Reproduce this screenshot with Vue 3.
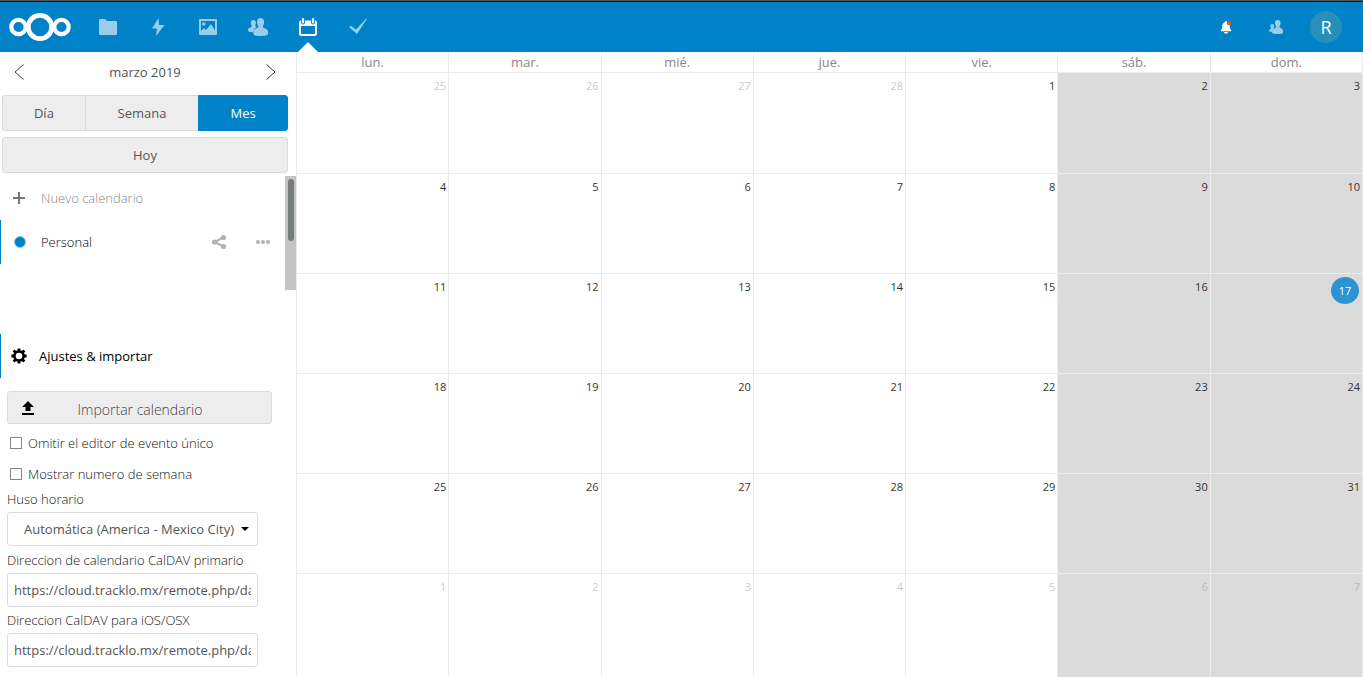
<script setup>
import { ref } from 'vue'

const weekdays = ['lun.', 'mar.', 'mié.', 'jue.', 'vie.', 'sáb.', 'dom.']
const start = new Date(2019, 1, 25)
const weeks = Array.from({ length: 6 }, (_, w) =>
  Array.from({ length: 7 }, (_, d) => {
    const date = new Date(start.getFullYear(), start.getMonth(), start.getDate() + w * 7 + d)
    const inMonth = date.getMonth() === 2
    return {
      day: date.getDate(),
      other: !inMonth,
      weekend: d > 4,
      today: inMonth && date.getDate() === 17
    }
  })
)

const views = [
  { id: 'day', label: 'Día' },
  { id: 'week', label: 'Semana' },
  { id: 'month', label: 'Mes' }
]
const view = ref('month')
const skipEditor = ref(false)
const weekNumbers = ref(false)
const primaryUrl = ref('https://cloud.tracklo.mx/remote.php/dav/')
const iosUrl = ref('https://cloud.tracklo.mx/remote.php/dav/principals/')
</script>

<template>
  <div class="page">
    <header class="topbar">
      <a class="logo" href="#" aria-label="Nextcloud">
        <svg width="64" height="32" viewBox="0 0 64 32" fill="none" stroke="#fff">
          <circle cx="10.5" cy="16" r="7.2" stroke-width="4.2" />
          <circle cx="32" cy="16" r="11.7" stroke-width="4.8" />
          <circle cx="53.5" cy="16" r="7.2" stroke-width="4.2" />
        </svg>
      </a>
      <nav class="apps">
        <a href="#" aria-label="Archivos">
          <svg width="20" height="20" viewBox="0 0 20 20"><path d="M1.500 2H7l2 2h9.500l.5.5v13l-.5.5h-17l-.5-.5v-15z" /></svg>
        </a>
        <a href="#" aria-label="Actividad">
          <svg width="20" height="20" viewBox="0 0 20 20"><path d="M10.500 1L4 11.500h5L8 19l8.500-11H11z" /></svg>
        </a>
        <a href="#" aria-label="Galería">
          <svg width="20" height="20" viewBox="0 0 20 20">
            <path fill-rule="evenodd" d="M1.500 2h17l.5.5v15l-.5.5h-17l-.5-.5v-15zM3 4v10l3-3 2 2 5-6 4 6.500V4z" />
            <circle cx="5.800" cy="7" r="1.800" />
          </svg>
        </a>
        <a href="#" aria-label="Contactos">
          <svg width="20" height="20" viewBox="0 0 20 20">
            <path d="M12.500 1C10.300 1 9 2.700 9 4.700c0 1.500.5 3 1.200 4V10.500C8 11.500 5.500 12 5.500 14.500v2.500c0 1.500 3 2 7.200 2s7.300-.7 7.300-2v-2.500c0-2.500-3-3-5-4V8.700c.7-1 1.100-2.500 1.100-4C16.100 2.700 14.700 1 12.500 1z" />
            <path d="M5.200 3C3.700 3 2.700 4.200 2.700 5.700c0 1 .4 2 .9 2.700v1.500C2 10.700 0 11 0 12.700v1c0 .7 1.500 1.200 5.500 1.800 0-3 1-4.500 3.500-5.700-.9-.4-1.900-.8-1.900-1.400.5-.7.8-1.700.8-2.700C7.900 4.200 6.800 3 5.200 3z" />
          </svg>
        </a>
        <a href="#" class="active" aria-label="Calendario">
          <svg width="20" height="20" viewBox="0 0 20 20">
            <path fill-rule="evenodd" d="M3 3.500h14c1.200 0 2 .8 2 2V17c0 1.200-.8 2-2 2H3c-1.200 0-2-.8-2-2V5.500c0-1.200.8-2 2-2zM3 9v7.500l.5.5h13l.5-.5V9z" />
            <path d="M5 2.200v3.300M15 2.200v3.300" stroke="#0082c9" stroke-width="4" stroke-linecap="round" />
            <path d="M5 2v3.500M15 2v3.500" stroke="#fff" stroke-width="2.200" stroke-linecap="round" />
          </svg>
        </a>
        <a href="#" aria-label="Tareas">
          <svg width="20" height="20" viewBox="0 0 20 20"><path d="M1 10l1.800-1.200L8 12.500 18.500 1.200l.5.500L9 17z" /></svg>
        </a>
      </nav>
      <div class="tools">
        <button type="button" aria-label="Notificaciones">
          <svg width="16" height="16" viewBox="0 0 16 16">
            <path fill="#fff" d="M8 2C7.400 2 7.200 2.400 7.200 3 5.300 3.500 4.500 5 4.300 7l-.3 2.500L2.800 11v1.200h10.400V11L12 9.500 11.700 7C11.500 5 10.700 3.500 8.800 3 8.800 2.400 8.600 2 8 2zM6 13h4c0 1-.9 1.700-2 1.700S6 14 6 13z" />
            <circle cx="11" cy="4" r="2.200" fill="#e9521c" />
          </svg>
        </button>
        <button type="button" aria-label="Contactos">
          <svg width="16" height="16" viewBox="0 0 16 16" fill="#99cde9">
            <path d="M9.800 1C8 1 6.900 2.200 6.900 3.800c0 1.300.4 2.300 1.100 3.200v1.600c-1.800.9-4 1.400-4 3.200v1.900c0 .8 2.700 1.300 5.800 1.300s5.200-.5 5.200-1.300v-1.900c0-1.900-2-2.400-3.400-3.200V7c.6-.9 1-1.900 1-3.200C12.600 2.200 11.600 1 9.800 1z" />
            <path d="M4.200 5C3 5 2.300 5.800 2.300 6.900c0 .8.300 1.500.7 2v.9C2 10.300 1 10.500 1 11.500v.7c.6.500 1.600.6 2.700.7 0-2 1.200-3 2.500-3.700L5.700 9c.3-.5.5-1.300.5-2.100C6.200 5.800 5.300 5 4.200 5z" />
          </svg>
        </button>
        <button type="button" aria-label="Cuenta"><span class="avatar">R</span></button>
      </div>
    </header>

    <div class="body">
      <aside class="sidebar">
        <div class="month-nav">
          <button type="button" aria-label="Mes anterior">
            <svg width="10" height="16" viewBox="0 0 10 16"><path d="M9.500 .5L1 8l8.500 7.500" /></svg>
          </button>
          <h1>marzo 2019</h1>
          <button type="button" aria-label="Mes siguiente">
            <svg width="10" height="16" viewBox="0 0 10 16"><path d="M.5 .5L9 8l-8.500 7.500" /></svg>
          </button>
        </div>
        <div class="views">
          <button
            v-for="v in views"
            :key="v.id"
            type="button"
            :class="[v.id, { selected: view === v.id }]"
            @click="view = v.id"
          >{{ v.label }}</button>
        </div>
        <button type="button" class="today-button">Hoy</button>

        <div class="calendars">
          <ul>
            <li>
              <button type="button" class="new-calendar">
                <svg width="12" height="12" viewBox="0 0 12 12"><path d="M6 0v12M0 6h12" stroke="#777" stroke-width="2" /></svg>
                <span>Nuevo calendario</span>
              </button>
            </li>
            <li class="calendar">
              <span class="dot"></span>
              <a href="#">Personal</a>
              <button type="button" aria-label="Compartir">
                <svg width="16" height="16" viewBox="0 0 16 16" fill="#b2b2b2">
                  <path d="M12.500 3.500L3.500 8l9 4.500" fill="none" stroke="#b2b2b2" stroke-width="2" />
                  <circle cx="12.500" cy="3.500" r="2.600" /><circle cx="3.500" cy="8" r="2.600" /><circle cx="12.500" cy="12.500" r="2.600" />
                </svg>
              </button>
              <button type="button" aria-label="Más">
                <svg width="16" height="16" viewBox="0 0 16 16" fill="#b2b2b2">
                  <circle cx="3" cy="8" r="2" /><circle cx="8" cy="8" r="2" /><circle cx="13" cy="8" r="2" />
                </svg>
              </button>
            </li>
          </ul>
          <div class="track"><div class="thumb"></div></div>
        </div>

        <section class="settings">
          <button type="button" class="settings-toggle">
            <svg width="16" height="16" viewBox="0 0 16 16">
              <circle cx="8" cy="8" r="4.600" fill="none" stroke="#000" stroke-width="2.600" />
              <path d="M8 .4v3M8 12.600v3M.4 8h3M12.600 8h3M2.600 2.600l2 2M11.400 11.400l2 2M2.600 13.400l2-2M11.400 4.600l2-2" stroke="#000" stroke-width="2.800" />
            </svg>
            <span>Ajustes &amp; importar</span>
          </button>
          <div class="settings-body">
            <button type="button" class="import">
              <svg width="14" height="16" viewBox="0 0 14 16"><path d="M7 1l6 6H9.500v4h-5V7H1zM1 13h12v2H1z" /></svg>
              <span>Importar calendario</span>
            </button>
            <label class="check"><input v-model="skipEditor" type="checkbox" />Omitir el editor de evento único</label>
            <label class="check"><input v-model="weekNumbers" type="checkbox" />Mostrar numero de semana</label>
            <label class="caption first" for="timezone">Huso horario</label>
            <div class="select">
              <select id="timezone">
                <option>Automática (America - Mexico City)</option>
              </select>
              <svg width="8" height="4" viewBox="0 0 8 4"><path d="M0 0h8L4 4z" /></svg>
            </div>
            <label class="caption" for="primary">Direccion de calendario CalDAV primario</label>
            <input id="primary" v-model="primaryUrl" class="url" type="text" readonly />
            <label class="caption" for="ios">Direccion CalDAV para iOS/OSX</label>
            <input id="ios" v-model="iosUrl" class="url" type="text" readonly />
          </div>
        </section>
      </aside>

      <main class="month">
        <table>
          <thead>
            <tr><th v-for="d in weekdays" :key="d" scope="col">{{ d }}</th></tr>
          </thead>
          <tbody>
            <tr v-for="(week, i) in weeks" :key="i">
              <td v-for="(c, j) in week" :key="j" :class="{ other: c.other, weekend: c.weekend, today: c.today }">
                <span>{{ c.day }}</span>
              </td>
            </tr>
          </tbody>
        </table>
      </main>
    </div>
  </div>
</template>

<style>
body {
  background: #fff;
}
</style>

<style scoped>
.page {
  display: flex;
  flex-direction: column;
  height: 100vh;
  overflow: hidden;
  font: 300 13px/18px "Open Sans", "Noto Sans", sans-serif;
  color: #111;
}
.page *,
.page *::before,
.page *::after {
  box-sizing: border-box;
}
button,
input,
select {
  font: inherit;
  color: inherit;
  margin: 0;
  padding: 0;
  border: 0;
  background: none;
}
a {
  color: inherit;
  text-decoration: none;
}
svg {
  display: block;
  flex: none;
}

.topbar {
  display: flex;
  align-items: center;
  flex: none;
  height: 52px;
  padding: 1px 12px 0 8px;
  background: #0082c9;
  border-top: 1px solid #555;
  box-shadow: inset 0 1px #0c1a22;
}
.logo {
  width: 75px;
}
.apps,
.tools {
  display: flex;
  height: 100%;
}
.tools {
  margin-left: auto;
}
.apps a,
.tools button {
  position: relative;
  display: flex;
  align-items: center;
  justify-content: center;
  width: 50px;
  height: 100%;
}
.apps a {
  fill: #99cde9;
}
.apps .active {
  fill: #fff;
}
.apps .active::after {
  content: "";
  position: absolute;
  bottom: 0;
  left: 15px;
  border: 10px solid transparent;
  border-top: 0;
  border-bottom-color: #fff;
}
.avatar {
  width: 32px;
  height: 32px;
  border-radius: 50%;
  background: #2890b8;
  color: #fff;
  font-size: 18px;
  font-weight: 500;
  line-height: 32px;
}

.body {
  display: flex;
  flex: 1;
  min-height: 0;
}
.sidebar {
  display: flex;
  flex-direction: column;
  flex: none;
  width: 296px;
}
.month-nav {
  display: flex;
  align-items: center;
  justify-content: space-between;
  height: 43px;
  padding: 0 20px 3px 14px;
}
.month-nav svg {
  fill: none;
  stroke: #333;
}
.month-nav h1 {
  margin: 0;
  font-size: 13px;
  font-weight: 400;
  color: #555;
}
.views {
  display: flex;
  height: 36px;
  margin: 0 8px 6px 2px;
}
.views button,
.today-button {
  border: 1px solid #dbdbdb;
  background: #ededed;
  color: #555;
  font-weight: 400;
}
.views .day {
  flex: 83;
  border-right: 0;
  border-radius: 3px 0 0 3px;
}
.views .week {
  flex: 114;
  border-right: 0;
}
.views .month {
  flex: 89;
  border-radius: 0 3px 3px 0;
}
.views .selected {
  background: #0082c9;
  border-color: #0082c9;
  color: #fff;
}
.today-button {
  height: 36px;
  margin: 0 8px 3px 2px;
  border-radius: 3px;
}

.calendars {
  display: flex;
  height: 114px;
}
.calendars ul {
  flex: 1;
  margin: 0;
  padding: 0;
  list-style: none;
}
.calendars li {
  display: flex;
  align-items: center;
  height: 44px;
}
.new-calendar {
  display: flex;
  align-items: center;
  gap: 16px;
  padding-left: 13px;
  color: #888;
}
.calendar {
  border-left: 1px solid #0082c9;
}
.calendar .dot {
  width: 12px;
  height: 12px;
  margin: 0 15px 0 13px;
  border: 1px solid #8fc4e2;
  border-radius: 50%;
  background: #0082c9;
}
.calendar a {
  flex: 1;
  color: #000;
}
.calendar button {
  display: flex;
  align-items: center;
  justify-content: center;
  width: 44px;
  height: 44px;
}
.track {
  width: 11px;
  padding: 3px 2px 0 3px;
  background: #c3c5c4;
}
.thumb {
  height: 62px;
  border-radius: 3px;
  background: #787d7c;
}

.settings {
  margin-top: auto;
}
.settings-toggle {
  display: flex;
  align-items: center;
  gap: 12px;
  width: 100%;
  height: 44px;
  padding-left: 10px;
  border-left: 1px solid #0082c9;
  color: #000;
  font-weight: 400;
}
.settings-body {
  display: flex;
  flex-direction: column;
  padding: 13px 38px 10px 7px;
}
.import {
  display: flex;
  align-items: center;
  height: 33px;
  margin: 0 -14px 3px 0;
  padding-left: 13px;
  border: 1px solid #dbdbdb;
  border-radius: 3px;
  background: #ededed;
  color: #444;
  font-size: 14px;
}
.import span {
  flex: 1;
  padding: 4px 26px 0 0;
}
.check {
  display: flex;
  align-items: center;
  height: 31px;
}
.check input {
  appearance: none;
  width: 12px;
  height: 12px;
  margin: 0 6px 0 3px;
  border: 1px solid #878787;
}
.caption {
  height: 26px;
  line-height: 26px;
}
.caption.first {
  height: 23px;
  line-height: 20px;
}
.select {
  display: grid;
  align-items: center;
  margin-bottom: 1px;
}
.select select,
.select svg {
  grid-area: 1 / 1;
}
.select svg {
  justify-self: end;
  margin-right: 9px;
  pointer-events: none;
}
.select select,
.url {
  appearance: none;
  width: 100%;
  height: 34px;
  padding: 0 6px;
  border: 1px solid #dbdbdb;
  border-radius: 3px;
  background: #fff;
  color: #555;
  font-weight: 400;
}
.select select {
  padding: 0 16px;
}

.month {
  flex: 1;
  min-width: 0;
}
.month table {
  width: 100%;
  height: 100%;
  table-layout: fixed;
  border-spacing: 0;
  border-right: 1px solid #ebebeb;
}
th {
  height: 21px;
  padding: 0;
  border-left: 1px solid #ebebeb;
  border-bottom: 1px solid #ebebeb;
  color: #888;
  font-size: 13px;
  font-weight: 400;
  line-height: 20px;
}
tbody tr {
  height: 100px;
}
tbody tr:last-child {
  height: auto;
}
td {
  padding: 4px 2px 0 0;
  border-left: 1px solid #ebebeb;
  border-top: 1px solid #ebebeb;
  color: #333;
  font-size: 11px;
  font-weight: 400;
  text-align: right;
  vertical-align: top;
}
tbody tr:first-child td {
  border-top: 0;
}
.weekend {
  background: #dbdbdb;
}
.other {
  color: #ccc;
}
.weekend.other {
  color: #bbb;
}
.today {
  padding: 3px 3px 0 0;
}
.today span {
  display: inline-block;
  width: 28px;
  height: 27px;
  border-radius: 50%;
  background: #2b94d1;
  color: #fff;
  line-height: 27px;
  text-align: center;
}
</style>
